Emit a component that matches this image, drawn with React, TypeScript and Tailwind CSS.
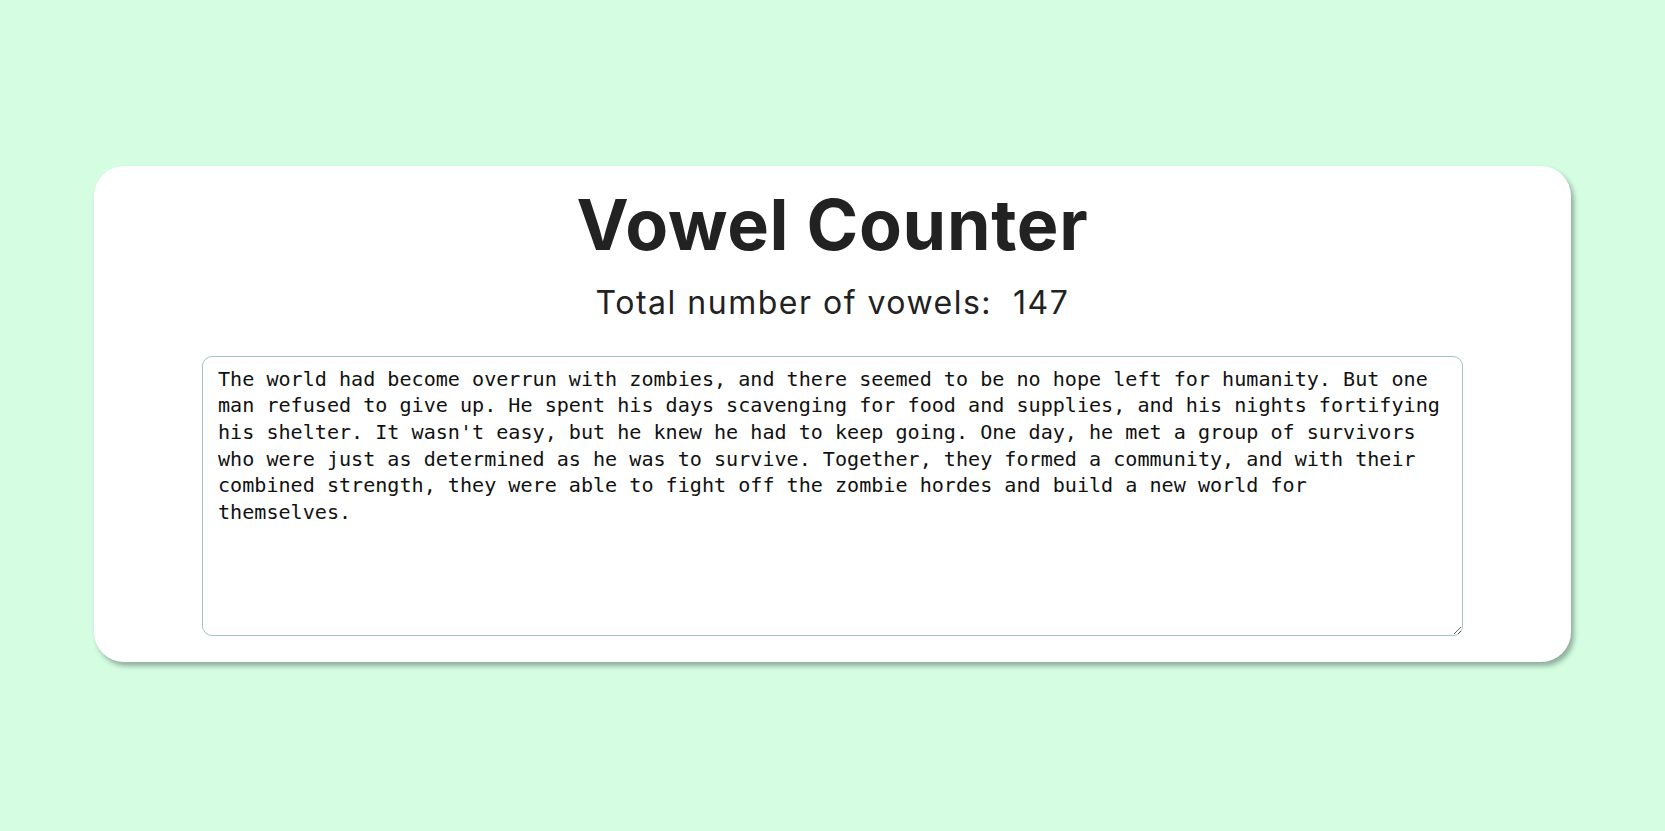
import React, { useState } from "react";

const initial =
  "The world had become overrun with zombies, and there seemed to be no hope left for humanity. But one man refused to give up. He spent his days scavenging for food and supplies, and his nights fortifying his shelter. It wasn't easy, but he knew he had to keep going. One day, he met a group of survivors who were just as determined as he was to survive. Together, they formed a community, and with their combined strength, they were able to fight off the zombie hordes and build a new world for themselves.";

export default function App() {
  const [text, setText] = useState(initial);
  const count = (text.match(/[aeiou]/gi) || []).length;
  return (
    <div className="min-h-[831px] w-full bg-[#d4fde2] flex items-center justify-center pb-[4px]">
      <div className="w-[1477px] bg-white rounded-[30px] shadow-[3px_4px_5px_rgba(60,80,70,0.45)] flex flex-col items-center pt-[19px] pb-[26px]">
        <h1 className="text-[70px] leading-[80px] font-bold text-[#222222] tracking-[0.7px] [font-family:Inter,'Noto_Sans',sans-serif]">
          Vowel Counter
        </h1>
        <p className="mt-[18px] text-[32px] leading-[40px] font-normal text-[#222222] tracking-[1.5px] [font-family:Inter,'Noto_Sans',sans-serif]">
          Total number of vowels:&nbsp;&nbsp;{count}
        </p>
        <textarea
          value={text}
          onChange={(e) => setText(e.target.value)}
          spellCheck={false}
          className="mt-[33px] w-[1261px] h-[280px] border border-[#a6c4b0] rounded-[10px] pt-[9px] px-[15px] text-[20.1px] leading-[26.7px] text-[#111111] outline-none [font-family:'DejaVu_Sans_Mono',monospace]"
        />
      </div>
    </div>
  );
}
